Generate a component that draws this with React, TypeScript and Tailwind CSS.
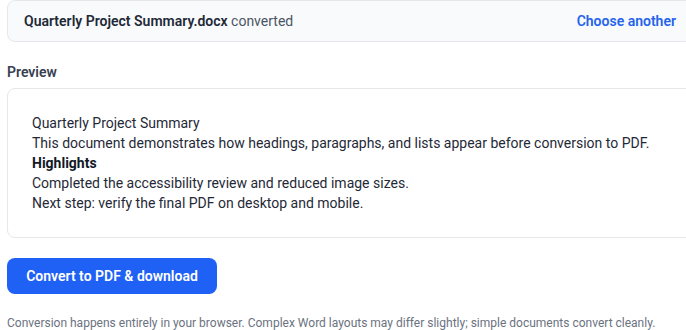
export default function App() {
  return (
    <div className="w-[686px] h-[330px] overflow-hidden bg-white" style={{ fontFamily: 'Roboto, "Noto Sans", sans-serif' }}>
      <div className="w-[686px] ml-[7px]">
        <div className="flex items-center justify-between h-[42px] px-4 rounded-lg border border-[#e5e7eb] bg-[#f8fafc] text-sm">
          <div className="text-[#1f2937]">
            <span className="font-semibold">Quarterly Project Summary.docx</span>{" "}
            <span className="text-[#4b5563]">converted</span>
          </div>
          <button className="font-semibold text-[#2563eb]">Choose another</button>
        </div>
        <div className="mt-5 text-sm leading-5 font-semibold text-[#374151]">Preview</div>
        <div className="mt-1.5 h-[150px] rounded-lg border border-[#e5e7eb] bg-white p-6 text-sm leading-5 text-[#1f2937]">
          <div>Quarterly Project Summary</div>
          <div>This document demonstrates how headings, paragraphs, and lists appear before conversion to PDF.</div>
          <div className="font-bold text-[#111827]">Highlights</div>
          <div>Completed the accessibility review and reduced image sizes.</div>
          <div>Next step: verify the final PDF on desktop and mobile.</div>
        </div>
        <button className="mt-5 h-9 w-[210px] rounded-lg bg-[#1f61f5] text-sm font-semibold text-white">
          Convert to PDF &amp; download
        </button>
        <div className="mt-[21px] text-xs leading-4 text-[#6b7280] whitespace-nowrap">
          Conversion happens entirely in your browser. Complex Word layouts may differ slightly; simple documents convert cleanly.
        </div>
      </div>
    </div>
  );
}
